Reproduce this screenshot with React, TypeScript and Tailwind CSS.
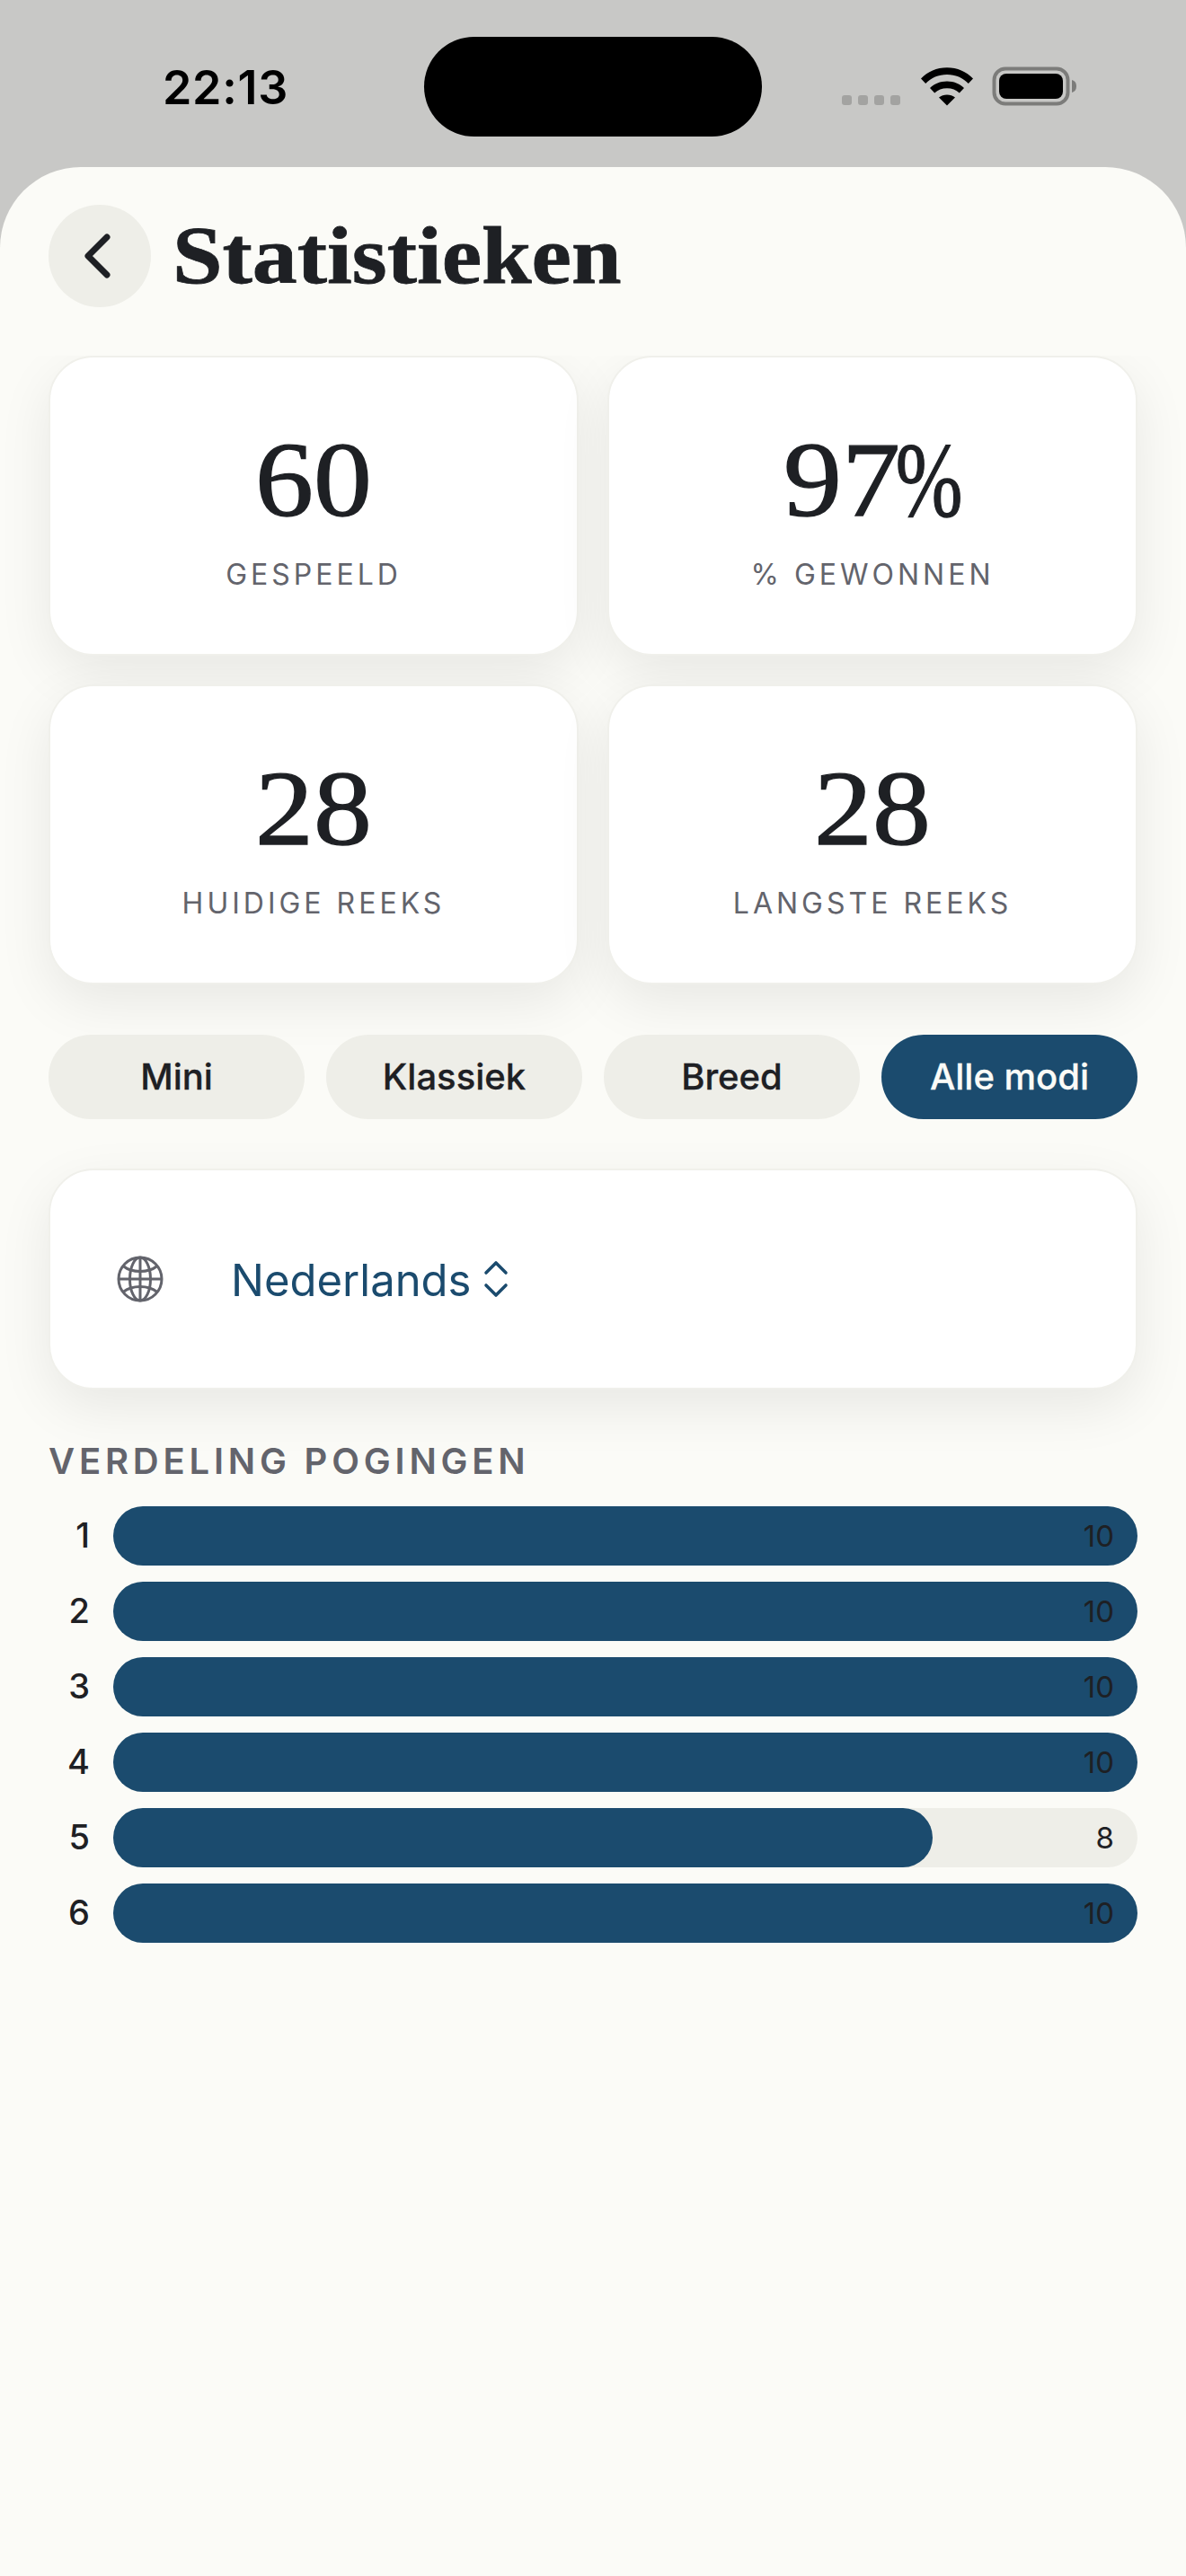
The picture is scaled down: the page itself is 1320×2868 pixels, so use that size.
const cards = [
  { value: "60", suffix: "", label: "GESPEELD" },
  { value: "97", suffix: "%", label: "% GEWONNEN" },
  { value: "28", suffix: "", label: "HUIDIGE REEKS" },
  { value: "28", suffix: "", label: "LANGSTE REEKS" },
];
const modes = ["Mini", "Klassiek", "Breed", "Alle modi"];
const bars = [
  { n: 1, v: 10 },
  { n: 2, v: 10 },
  { n: 3, v: 10 },
  { n: 4, v: 10 },
  { n: 5, v: 8 },
  { n: 6, v: 10 },
];

function StatusBar() {
  return (
    <div className="relative h-[186px] shrink-0">
      <span className="absolute left-[181px] top-[66px] text-[52px] leading-[64px] font-semibold text-black tracking-[0.7px]">22:13</span>
      <div className="absolute left-[472px] top-[41px] h-[111px] w-[376px] rounded-[56px] bg-black" />
      <div className="absolute left-[937px] top-[106px] flex gap-[7px]">
        {[0, 1, 2, 3].map((i) => (
          <div key={i} className="h-[11px] w-[11px] rounded-[3px] bg-[#a3a3a1]" />
        ))}
      </div>
      <svg className="absolute left-[1024px] top-[74px]" width="60" height="44" viewBox="0 0 60 44">
        <path d="M1 13.5C8.5 5.5 18.5 1.2 30 1.2S51.5 5.5 59 13.5L53.8 19C47.5 12.5 39.5 9 30 9S12.5 12.5 6.2 19Z" fill="#000" />
        <path d="M11 24C16 19.2 22.5 16.5 30 16.5S44 19.2 49 24L43.8 29.5C40 26 35.5 24.2 30 24.2S20 26 16.2 29.5Z" fill="#000" />
        <path d="M21 34.5C23.5 32.4 26.5 31.4 30 31.4S36.5 32.4 39 34.5L30 43.5Z" fill="#000" />
      </svg>
      <svg className="absolute left-[1104px] top-[74px]" width="96" height="44" viewBox="0 0 96 44">
        <rect x="2.5" y="2.5" width="82" height="39" rx="12.5" fill="none" stroke="#7c7c7a" strokeWidth="4" />
        <rect x="8" y="8" width="71" height="28" rx="8" fill="#000" />
        <path d="M89 15C92.5 16 94 18.6 94 22S92.5 28 89 29Z" fill="#7c7c7a" />
      </svg>
    </div>
  );
}

function Globe() {
  return (
    <svg width="52" height="52" viewBox="0 0 52 52" fill="none" stroke="#63646c" strokeWidth="3" className="shrink-0">
      <circle cx="26" cy="26" r="24" />
      <ellipse cx="26" cy="26" rx="11.5" ry="24" />
      <path d="M26 2V50M2 26H50" />
      <path d="M7 11.5C12 15.5 18.5 17.5 26 17.5S40 15.5 45 11.5" />
      <path d="M7 40.5C12 36.5 18.5 34.5 26 34.5S40 36.5 45 40.5" />
    </svg>
  );
}

export default function App() {
  return (
    <div className="flex h-[2868px] w-[1320px] flex-col overflow-hidden bg-[#c8c8c6] font-['Inter',sans-serif] text-[#1e2024]">
      <StatusBar />
      <div className="flex min-h-0 flex-1 flex-col rounded-t-[90px] bg-[#fbfbf7]">
        <div className="mt-[42px] mb-[54px] flex h-[114px] shrink-0 items-center gap-[24px] pl-[54px]">
          <div className="flex h-[114px] w-[114px] items-center justify-center rounded-full bg-[#eeeee8]">
            <svg className="-ml-[6px]" width="40" height="56" viewBox="0 0 40 56" fill="none" stroke="#1e2024" strokeWidth="7" strokeLinecap="round" strokeLinejoin="round">
              <path d="M31 7L10 28L31 49" />
            </svg>
          </div>
          <h1 className="origin-left scale-x-[1.11] font-['Liberation_Serif',serif] text-[90px] leading-[114px] font-bold [-webkit-text-stroke:0.8px_#1e2024]">Statistieken</h1>
        </div>
        <div className="flex min-h-0 flex-1 flex-col overflow-hidden px-[54px]">
          <div className="grid grid-cols-2 gap-[32px]">
            {cards.map((c) => (
              <div key={c.label} className="flex h-[334px] flex-col items-center rounded-[50px] border-2 border-[#f0f0eb] bg-white pt-[72px] shadow-[0_20px_60px_rgba(0,0,0,0.08)]">
                <div className="flex h-[130px] items-center font-['Liberation_Serif',serif] text-[118px] leading-[130px] [-webkit-text-stroke:1.4px_#1e2024]">
                  <span className="mx-[6px] inline-block scale-x-[1.1]">{c.value}</span>
                  {c.suffix && (
                    <span className="-ml-[4px] flex w-[72px] justify-center">
                      <span className="inline-block scale-x-[0.76]">{c.suffix}</span>
                    </span>
                  )}
                </div>
                <div className="mt-[20px] text-[32px] leading-[40px] tracking-[4px] text-[#63646c]">{c.label}</div>
              </div>
            ))}
          </div>
          <div className="mt-[56px] grid grid-cols-4 gap-[24px]">
            {modes.map((m, i) => (
              <div key={m} className={i === 3
                ? "flex h-[94px] items-center justify-center rounded-full bg-[#1b4b6e] text-[40px] font-medium text-[#fbfbf7] [-webkit-text-stroke:0.3px_#fbfbf7]"
                : "flex h-[94px] items-center justify-center rounded-full bg-[#eeeee8] text-[40px] font-medium text-[#1e2024] [-webkit-text-stroke:0.3px_#1e2024]"}>
                {m}
              </div>
            ))}
          </div>
          <div className="mt-[55px] flex h-[246px] items-center rounded-[50px] border-2 border-[#f0f0eb] bg-white pl-[74px] shadow-[0_20px_60px_rgba(0,0,0,0.08)]">
            <Globe />
            <span className="ml-[75px] pt-[3px] text-[49px] text-[#1b4b6e]">Nederlands</span>
            <svg className="ml-[14px]" width="28" height="42" viewBox="0 0 28 42" fill="none" stroke="#1b4b6e" strokeWidth="3.6" strokeLinecap="round" strokeLinejoin="round">
              <path d="M3 14L14 3L25 14M3 28L14 39L25 28" />
            </svg>
          </div>
          <div className="mt-[56px] text-[40px] leading-[48px] font-semibold tracking-[4.8px] text-[#63646c]">VERDELING POGINGEN</div>
          <div className="mt-[26px] flex flex-col gap-[18px]">
            {bars.map((b) => (
              <div key={b.n} className="flex h-[66px] items-center">
                <div className="w-[47px] pr-[1px] pb-[2px] text-right text-[38px] font-medium">{b.n}</div>
                <div className="ml-[25px] relative h-[66px] flex-1 rounded-full bg-[#eeeee8]">
                  <div className="h-full rounded-full bg-[#1b4b6e]" style={{ width: `${(b.v / 10) * 100}%` }} />
                  <span className="absolute right-[26px] top-0 text-[33px] leading-[66px]">{b.v}</span>
                </div>
              </div>
            ))}
          </div>
        </div>
      </div>
    </div>
  );
}
